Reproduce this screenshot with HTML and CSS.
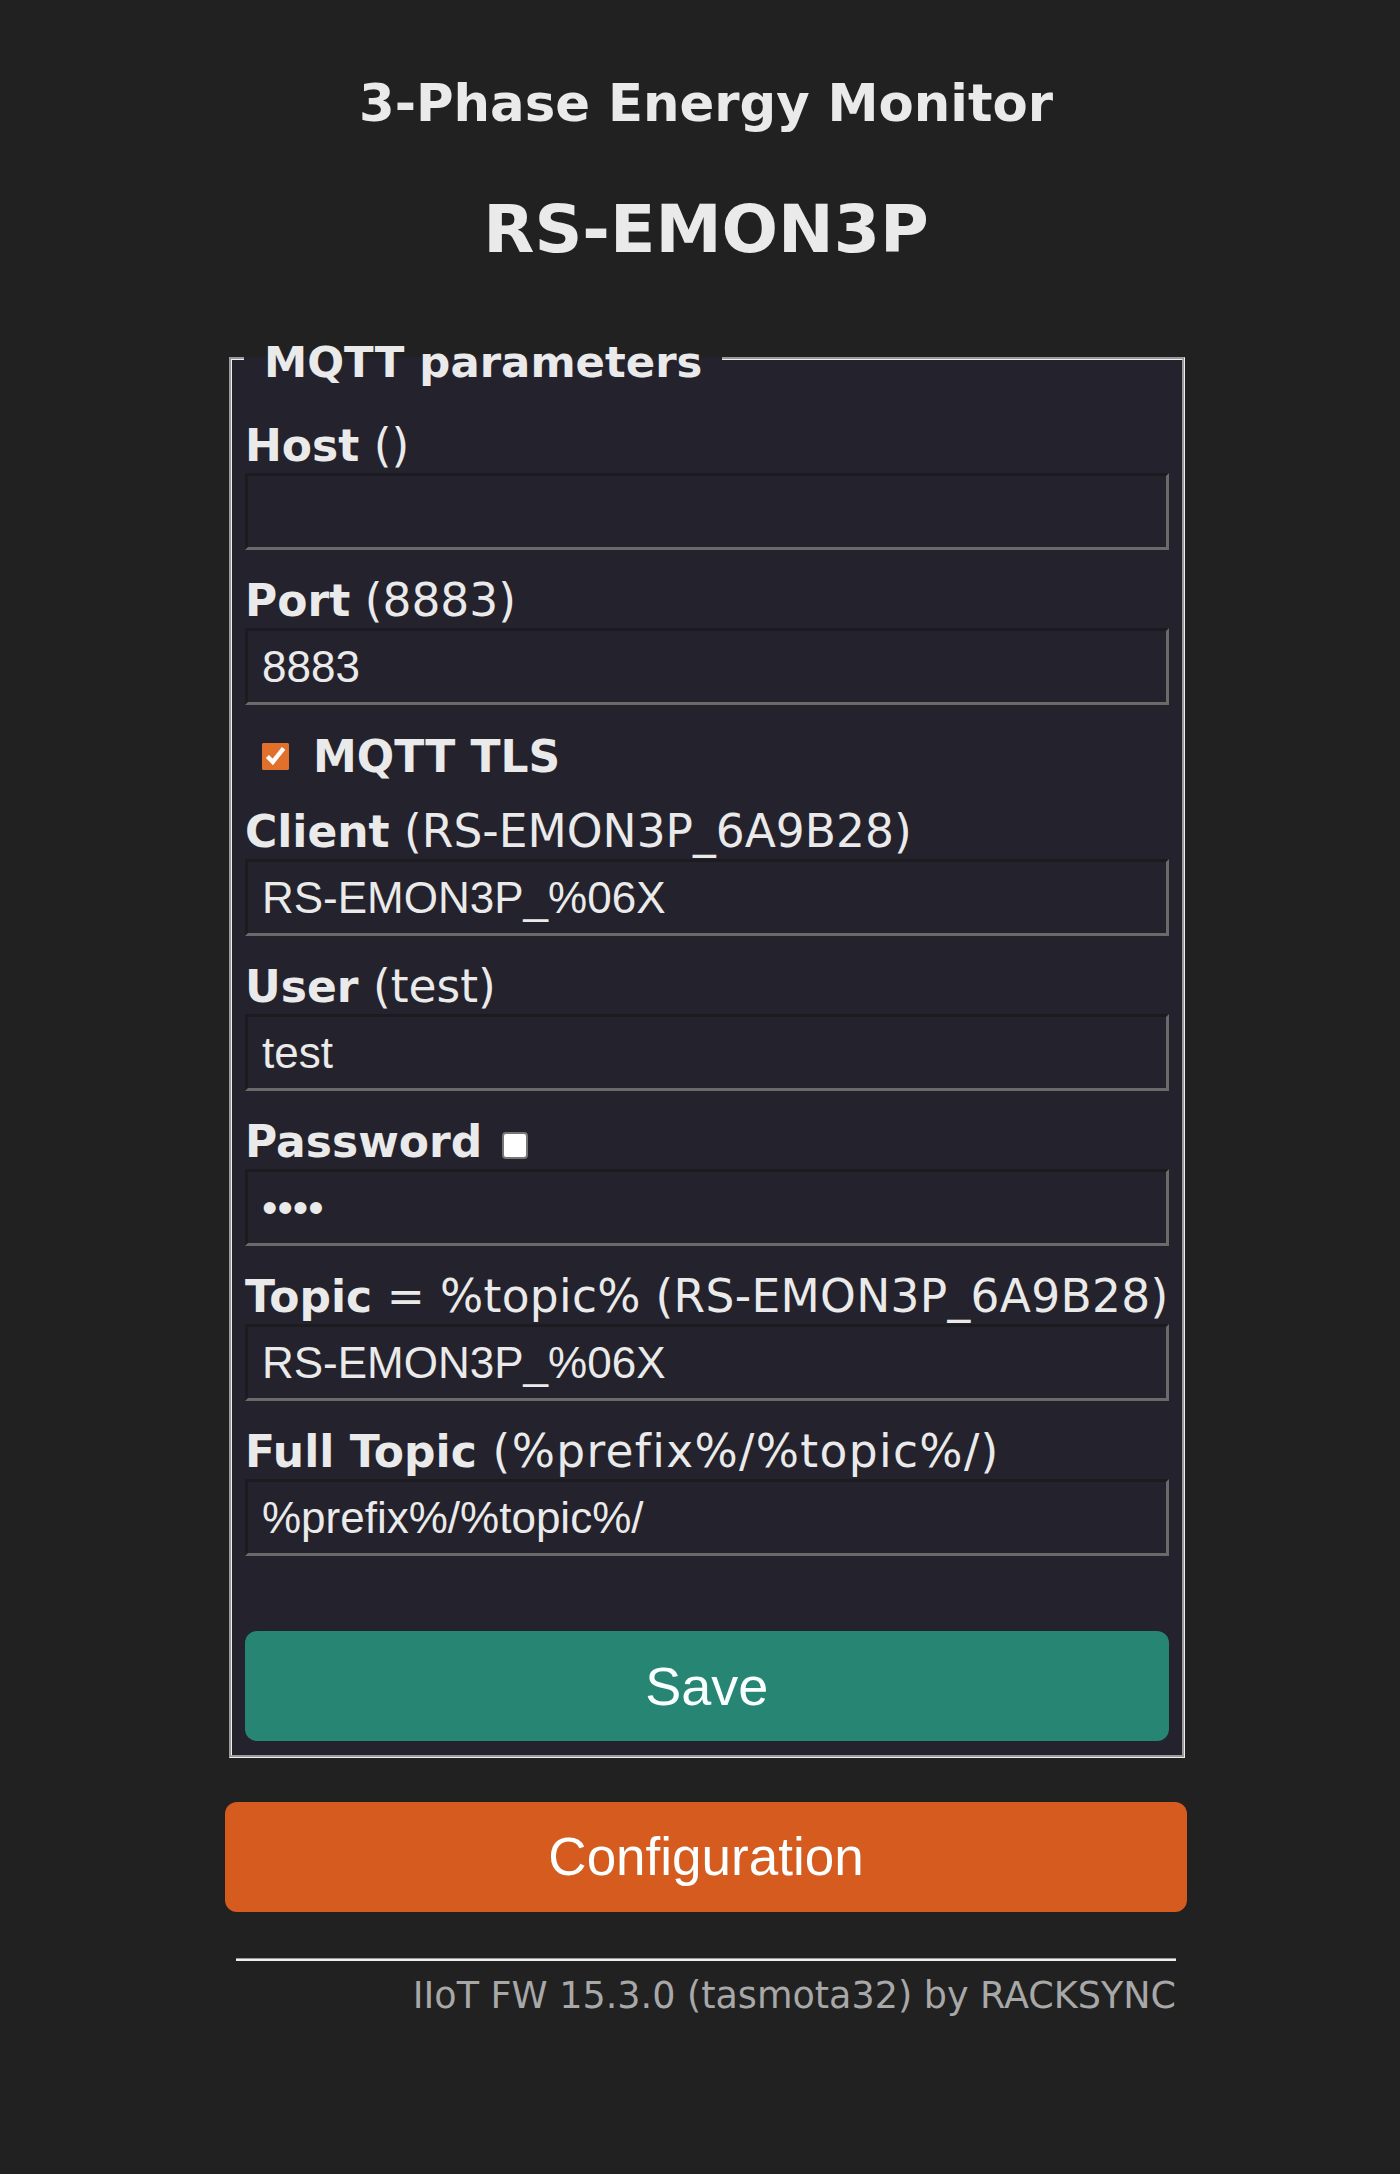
FILE: index.html
```html
<!DOCTYPE html>
<html lang="en">
<head>
<meta charset="utf-8">
<title>RS-EMON3P - MQTT</title>
<link rel="stylesheet" href="styles.css">
</head>
<body>
<div class="wrap">
  <header class="head">
    <h3 class="model">3-Phase Energy Monitor</h3>
    <h2 class="devname">RS-EMON3P</h2>
  </header>
  <fieldset class="panel">
    <legend class="legend">MQTT parameters</legend>
    <form class="form">
      <p class="field"><span class="label"><b>Host</b><span class="hint"> ()</span></span><input class="text" type="text" value=""></p>
      <p class="field"><span class="label"><b>Port</b><span class="hint"> (8883)</span></span><input class="text" type="text" value="8883"></p>
      <p class="check"><input class="cb cb-on" type="checkbox" checked><b>MQTT TLS</b></p>
      <p class="field"><span class="label"><b>Client</b><span class="hint"> (RS-EMON3P_6A9B28)</span></span><input class="text" type="text" value="RS-EMON3P_%06X"></p>
      <p class="field"><span class="label"><b>User</b><span class="hint"> (test)</span></span><input class="text" type="text" value="test"></p>
      <p class="field"><span class="label"><b>Password</b><input class="cb cb-off" type="checkbox"></span><input class="text pw" type="password" value="test"></p>
      <p class="field"><span class="label"><b>Topic</b><span class="hint topic"> = %topic% (RS-EMON3P_6A9B28)</span></span><input class="text" type="text" value="RS-EMON3P_%06X"></p>
      <p class="field"><span class="label"><b>Full Topic</b><span class="hint wide"> (%prefix%/%topic%/)</span></span><input class="text" type="text" value="%prefix%/%topic%/"></p>
      <button class="btn btn-save" type="button">Save</button>
    </form>
  </fieldset>
  <button class="btn btn-config" type="button">Configuration</button>
  <footer class="foot">
    <hr class="rule">
    <div class="ver">IIoT FW 15.3.0 (tasmota32) by RACKSYNC</div>
  </footer>
</div>
</body>
</html>
```
FILE: styles.css
```css
html, body {
  margin: 0;
  background: #212121;
}
body {
  padding: 0 0 0 12px;
  font-family: "DejaVu Sans", Verdana, sans-serif;
  color: #eaeaea;
  font-size: 44px;
  min-height: 2174px;
  box-sizing: border-box;
}
.wrap {
  width: 962px;
  margin: 0 auto;
}
.head {
  text-align: center;
}
.model {
  margin: 73px 0 0;
  font-size: 51.3px;
  line-height: 60px;
  font-weight: bold;
}
.devname {
  margin: 58px 0 0;
  font-size: 66.5px;
  line-height: 76px;
  font-weight: bold;
}
.panel {
  margin: 65px 4px 0;
  padding: 35px 13px 14px;
  background: #24222c;
  border: 3px groove #eeeeee;
}
.legend {
  position: relative;
  top: 4px;
  padding: 0 20px;
  margin-left: -1px;
  font-weight: bold;
  font-size: 43.4px;
  line-height: 52px;
}
.form {
  display: flex;
  flex-direction: column;
}
.field {
  margin: 0 0 24px;
}
.label {
  display: flex;
  align-items: center;
  height: 54px;
  line-height: 54px;
  white-space: pre;
}
.hint {
  font-size: 45.5px;
}
.topic {
  letter-spacing: 0.3px;
}
.wide {
  letter-spacing: 1.35px;
}
.text {
  display: block;
  width: 100%;
  height: 77px;
  box-sizing: border-box;
  margin: 0;
  padding: 0 14px;
  background: #24222c;
  color: #eaeaea;
  font-family: "Liberation Sans", Arial, sans-serif;
  font-size: 44px;
  border-style: solid;
  border-width: 3px;
  border-color: #1c1b20 #6a6a6a #6a6a6a #1c1b20;
  outline: none;
}
.pw {
  font-size: 44px;
}
.check {
  display: flex;
  align-items: center;
  gap: 24px;
  height: 54px;
  margin: 0 0 22px;
  padding-left: 17px;
}
.cb {
  margin: 0;
  width: 27px;
  height: 27px;
  accent-color: #e0702c;
}
.cb-off {
  appearance: none;
  -webkit-appearance: none;
  box-sizing: border-box;
  width: 26px;
  height: 27px;
  margin-left: 20px;
  margin-top: 6px;
  background: #ffffff;
  border: 2px solid #767676;
  border-radius: 4px;
}
.btn {
  display: block;
  width: 100%;
  border: 0;
  border-radius: 12px;
  color: #faffff;
  font-family: "Liberation Sans", Arial, sans-serif;
  font-size: 54px;
  height: 110px;
  line-height: 110px;
  padding: 0;
  cursor: pointer;
}
.btn-save {
  margin-top: 51px;
  background: #268573;
}
.btn-config {
  margin-top: 44px;
  background: #d55b1f;
  font-size: 53px;
}
.foot {
  padding: 0 11px;
  text-align: right;
}
.rule {
  margin: 46px 0 0;
  border: 0;
  border-top: 1px solid #9a9a9a;
  border-bottom: 2px solid #eeeeee;
  height: 0;
}
.ver {
  margin-top: 16px;
  font-size: 36.5px;
  line-height: 38px;
  color: #a8a8a8;
}
```
